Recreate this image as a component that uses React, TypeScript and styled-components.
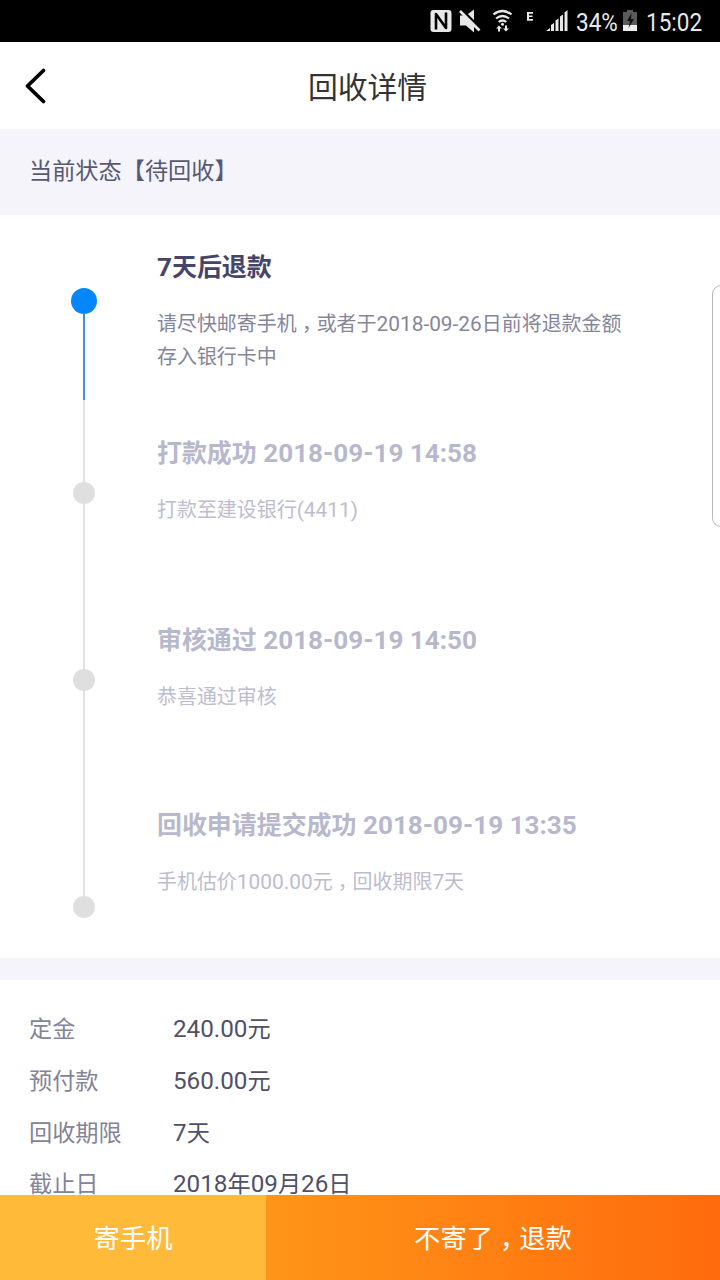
import React from 'react';
import styled, { createGlobalStyle } from 'styled-components';

const GlobalStyle = createGlobalStyle`
  * { box-sizing: border-box; }
  body {
    margin: 0;
    background: #fff;
    font-family: Roboto, "Noto Sans CJK SC", sans-serif;
  }
`;

const Screen = styled.div`
  position: relative;
  display: flex;
  flex-direction: column;
  width: 720px;
  height: 1280px;
  overflow: hidden;
  background: #fff;
`;

const StatusBar = styled.div`
  display: flex;
  align-items: center;
  flex: none;
  height: 42px;
  padding-left: 430px;
  background: #000;
  color: #e8e8e8;
`;

const StatusIcons = styled.svg`
  flex: none;
  width: 140px;
  height: 42px;
`;

const StatusText = styled.span<{ $width: number }>`
  flex: none;
  width: ${(p) => p.$width}px;
  padding-top: 1px;
  margin-left: 6px;
  font-size: 26.5px;
  line-height: 30px;
  white-space: nowrap;
  transform: scaleX(0.85);
  transform-origin: left center;
`;

const BatteryIcon = styled.svg`
  flex: none;
  width: 14px;
  height: 42px;
  margin-right: 3px;
`;

const Header = styled.header`
  display: grid;
  grid-template-columns: 72px 1fr 72px;
  align-items: center;
  flex: none;
  height: 87px;
  padding-top: 2px;
`;

const BackIcon = styled.svg`
  width: 72px;
  height: 44px;
`;

const Title = styled.h1`
  margin: 2px 0 0 15px;
  color: #333;
  font-size: 29.8px;
  font-weight: 400;
  line-height: 44px;
  text-align: center;
`;

const StateBand = styled.div`
  flex: none;
  height: 86px;
  padding: 25px 29px;
  background: #f4f4fa;
  color: #585875;
  font-size: 23.2px;
  line-height: 34px;
`;

const Timeline = styled.section`
  display: flex;
  flex: none;
  height: 743px;
`;

const Rail = styled.div`
  display: flex;
  flex-direction: column;
  align-items: center;
  width: 157px;
  padding: 73px 0 0 11px;
`;

const Dot = styled.div<{ $active?: boolean }>`
  flex: none;
  width: ${(p) => (p.$active ? 26 : 22)}px;
  height: ${(p) => (p.$active ? 26 : 22)}px;
  border-radius: 50%;
  background: ${(p) => (p.$active ? '#0486ff' : '#dfdfdf')};
`;

const Line = styled.div<{ $length: number; $active?: boolean }>`
  flex: none;
  width: 2px;
  height: ${(p) => p.$length}px;
  background: ${(p) => (p.$active ? '#3d90dc' : '#e2e2e2')};
`;

const Steps = styled.div`
  width: 490px;
  padding-top: 35px;
`;

const Step = styled.article<{ $height: number; $active?: boolean }>`
  height: ${(p) => p.$height}px;
  color: ${(p) => (p.$active ? '#858599' : '#bdbdcd')};
`;

const StepTitle = styled.h2<{ $active?: boolean }>`
  margin: 0 0 22px;
  color: ${(p) => (p.$active ? '#45456a' : '#b8b8cd')};
  font-size: 24.95px;
  font-weight: 700;
  line-height: 36px;
  white-space: nowrap;
`;

const StepText = styled.p`
  margin: 0;
  font-size: 19.97px;
  line-height: 33px;
  white-space: nowrap;
`;

const Latin = styled.span`
  font-size: 1.045em;
  line-height: 1;
`;

const Comma = styled.span`
  font-family: "Noto Sans CJK TC", sans-serif;
  line-height: 0;
  vertical-align: -0.32em;
`;

const Divider = styled.div`
  flex: none;
  height: 22px;
  background: #f4f4fa;
`;

const Details = styled.dl`
  flex: 1;
  min-height: 0;
  margin: 0;
  padding: 23px 29px 0;
  overflow: hidden;
`;

const DetailRow = styled.div`
  display: grid;
  grid-template-columns: 144px 1fr;
  height: 51.8px;
  font-size: 23.2px;
  line-height: 52px;
`;

const Label = styled.dt`
  color: #838399;
`;

const Value = styled.dd`
  margin: 0;
  color: #505068;
`;

const Footer = styled.footer`
  display: grid;
  grid-template-columns: 266px 1fr;
  flex: none;
  height: 85px;
`;

const Action = styled.button<{ $primary?: boolean }>`
  padding: 2px 0 0;
  border: 0;
  background: ${(p) =>
    p.$primary ? 'linear-gradient(90deg, #ff9518, #ff6b0d)' : '#ffba3a'};
  color: #fff;
  font: inherit;
  font-size: 26.3px;
  line-height: 38px;
`;

const EdgeHandle = styled.div`
  position: absolute;
  top: 285px;
  right: -10px;
  width: 18px;
  height: 242px;
  border: 1px solid #b9b9b9;
  border-radius: 9px;
  background: #fff;
`;

/* Latin runs sit slightly larger than the Chinese glyphs around them. */
const Mixed = ({ text }: { text: string }) => (
  <>
    {text.split(/([\x20-\x7e]+|，)/).map((part, i) => {
      if (part === '，') return <Comma key={i}>{part}</Comma>;
      return i % 2 ? <Latin key={i}>{part}</Latin> : part;
    })}
  </>
);

const details = [
  ['定金', '240.00元'],
  ['预付款', '560.00元'],
  ['回收期限', '7天'],
  ['截止日', '2018年09月26日'],
];

export default function App() {
  return (
    <Screen>
      <GlobalStyle />
      <StatusBar>
        <StatusIcons viewBox="430 0 140 42" fill="#e8e8e8">
          <rect x="430.5" y="10" width="21" height="22" rx="3" />
          <path
            d="M436 29.500V14L446 28V12.500"
            fill="none"
            stroke="#000"
            strokeWidth="2.600"
            strokeLinejoin="round"
          />
          <path d="M460 15.500h6l8-6v23l-8-7h-6z" />
          <path d="M460 8l22 22" stroke="#000" strokeWidth="2.500" />
          <path d="M460 11l19.500 19.500" stroke="#e8e8e8" strokeWidth="2.600" />
          <g fill="none" stroke="#e8e8e8" strokeWidth="2.200">
            <path d="M493.500 14.500q9-7 18 0" />
            <path d="M496 18.500q6.500-5 13 0" />
            <path d="M498.700 22q3.800-3 7.600 0" />
          </g>
          <circle cx="502.500" cy="24.300" r="1.500" />
          <path d="M499 25.500l3 3h-2v3h-2v-3h-2zM506 31.500l-3-3h2v-3h2v3h2z" />
          <path d="M527 12h6v1.700h-4v1.700h3.500v1.700H529v2h4v1.700h-6z" />
          <path d="M546 31l4-3v3zM551 31v-6l3-2v8zM555.500 31V20.500l3-2V31zM560 31V16.500l3-2V31zM564.500 31V12.500l3-2.500v21z" />
        </StatusIcons>
        <StatusText $width={47}>34%</StatusText>
        <BatteryIcon viewBox="0 0 14 42">
          <path d="M4 10h6v2h4v19H0V12h4z" fill="#5a5a5a" />
          <path d="M0 25h14v6H0z" fill="#eee" />
          <path d="M8.500 13L4 21h3l-1.500 7L11 19H8z" fill="#111" />
        </BatteryIcon>
        <StatusText $width={65}>15:02</StatusText>
      </StatusBar>

      <Header>
        <BackIcon viewBox="0 0 72 44">
          <path
            d="M43.500 5.500L27.500 21L43.500 36.500"
            fill="none"
            stroke="#000"
            strokeWidth="3.800"
            strokeLinecap="round"
            strokeLinejoin="round"
          />
        </BackIcon>
        <Title>回收详情</Title>
      </Header>

      <StateBand>当前状态【待回收】</StateBand>

      <Timeline>
        <Rail>
          <Dot $active />
          <Line $length={86} $active />
          <Line $length={82} />
          <Dot />
          <Line $length={165} />
          <Dot />
          <Line $length={205} />
          <Dot />
        </Rail>
        <Steps>
          <Step $height={185.5} $active>
            <StepTitle $active><Mixed text="7天后退款" /></StepTitle>
            <StepText>
              <Mixed text="请尽快邮寄手机，或者于2018-09-26日前将退款金额" />
              <br />
              存入银行卡中
            </StepText>
          </Step>
          <Step $height={187}>
            <StepTitle><Mixed text="打款成功 2018-09-19 14:58" /></StepTitle>
            <StepText><Mixed text="打款至建设银行(4411)" /></StepText>
          </Step>
          <Step $height={185.5}>
            <StepTitle><Mixed text="审核通过 2018-09-19 14:50" /></StepTitle>
            <StepText>恭喜通过审核</StepText>
          </Step>
          <Step $height={133}>
            <StepTitle><Mixed text="回收申请提交成功 2018-09-19 13:35" /></StepTitle>
            <StepText><Mixed text="手机估价1000.00元，回收期限7天" /></StepText>
          </Step>
        </Steps>
      </Timeline>

      <Divider />

      <Details>
        {details.map(([label, value]) => (
          <DetailRow key={label}>
            <Label>{label}</Label>
            <Value><Mixed text={value} /></Value>
          </DetailRow>
        ))}
      </Details>

      <Footer>
        <Action>寄手机</Action>
        <Action $primary><Mixed text="不寄了，退款" /></Action>
      </Footer>

      <EdgeHandle />
    </Screen>
  );
}
